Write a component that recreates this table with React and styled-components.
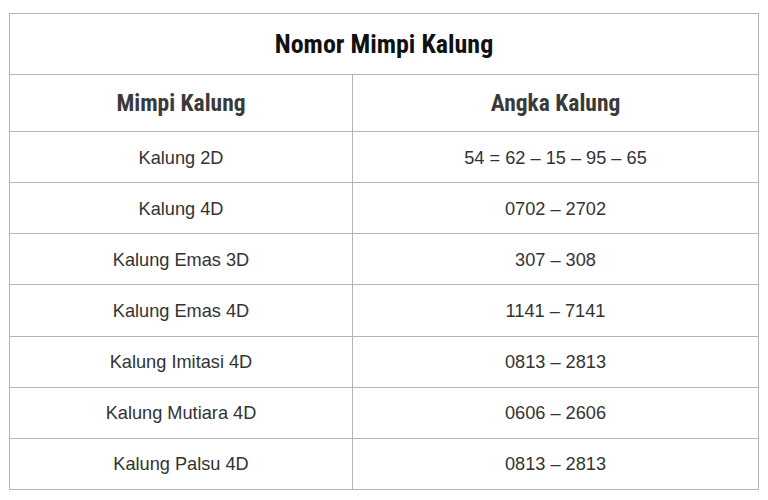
import React from "react";
import styled, { createGlobalStyle } from "styled-components";

const rows = [
  ["Kalung 2D", "54 = 62 – 15 – 95 – 65"],
  ["Kalung 4D", "0702 – 2702"],
  ["Kalung Emas 3D", "307 – 308"],
  ["Kalung Emas 4D", "1141 – 7141"],
  ["Kalung Imitasi 4D", "0813 – 2813"],
  ["Kalung Mutiara 4D", "0606 – 2606"],
  ["Kalung Palsu 4D", "0813 – 2813"],
];

const GlobalStyle = createGlobalStyle`
  body {
    margin: 0;
    background: #ffffff;
    font-family: "Liberation Sans", Arial, sans-serif;
  }
`;

const Page = styled.div`
  padding: 13px 10px 0 9px;
`;

const Table = styled.table`
  width: 749px;
  border-collapse: collapse;
  table-layout: fixed;
`;

const Col = styled.col`
  width: ${(p) => p.$w}px;
`;

const TitleCell = styled.th`
  height: 60px;
  border: 1px solid #b4b4b4;
  padding: 0;
  font-family: "Roboto Condensed", "Liberation Sans Narrow", "DejaVu Sans Condensed", sans-serif;
  font-weight: 700;
  font-size: 26px;
  color: #111111;
  text-align: center;
  vertical-align: middle;
`;

const HeadCell = styled.th`
  height: 56px;
  border: 1px solid #b4b4b4;
  padding: 0;
  font-family: "Roboto Condensed", "Liberation Sans Narrow", "DejaVu Sans Condensed", sans-serif;
  font-weight: 700;
  font-size: 23.5px;
  color: #3a3a3a;
  text-align: center;
  vertical-align: middle;
`;

const Cell = styled.td`
  height: 48.15px;
  border: 1px solid #b4b4b4;
  padding: 2px 0 0;
  font-size: 18.2px;
  line-height: 21px;
  color: #333333;
  text-align: center;
  vertical-align: middle;
`;

export default function App() {
  return (
    <>
      <GlobalStyle />
      <Page>
        <Table>
          <colgroup>
            <Col $w={343} />
            <Col $w={406} />
          </colgroup>
          <thead>
            <tr>
              <TitleCell colSpan={2}>Nomor Mimpi Kalung</TitleCell>
            </tr>
            <tr>
              <HeadCell>Mimpi Kalung</HeadCell>
              <HeadCell>Angka Kalung</HeadCell>
            </tr>
          </thead>
          <tbody>
            {rows.map(([name, num]) => (
              <tr key={name}>
                <Cell>{name}</Cell>
                <Cell>{num}</Cell>
              </tr>
            ))}
          </tbody>
        </Table>
      </Page>
    </>
  );
}
